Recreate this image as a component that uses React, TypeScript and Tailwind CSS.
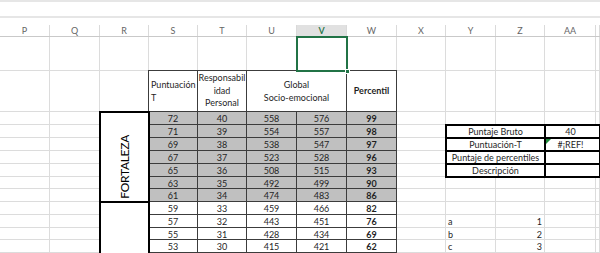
import clsx from "clsx";

const S = [72, 71, 69, 67, 65, 63, 61, 59, 57, 55, 53];
const T = [40, 39, 38, 37, 36, 35, 34, 33, 32, 31, 30];
const U = [558, 554, 538, 523, 508, 492, 474, 459, 443, 428, 415];
const V = [576, 557, 547, 528, 515, 499, 483, 466, 451, 434, 421];
const W = [99, 98, 97, 96, 93, 90, 86, 82, 76, 69, 62];

const letters = ["P", "Q", "R", "S", "T", "U", "V", "W", "X", "Y", "Z", "AA", ""];
const COLS = "grid-cols-[50px_50px_49px_49px_49px_50px_50px_50px_49px_50px_49px_51px_1fr]";

const DataCell = ({ children, gray, bold }: { children?: React.ReactNode; gray?: boolean; bold?: boolean }) => (
  <div
    className={clsx(
      "flex items-center justify-center pt-px border-r border-b border-[#3c3c3c] text-[9px] leading-none",
      gray ? "bg-[#c0c0c0]" : "bg-white",
      bold && "font-bold"
    )}
  >
    {children}
  </div>
);

export default function App() {
  return (
    <div className="w-[600px] h-[253px] overflow-hidden bg-white font-['Lato',sans-serif] text-[#1f1f1f]">
      {/* formula bar strip */}
      <div className="h-[2px] bg-[#e6e6e6]" />
      <div className="h-[14px] bg-white" />
      <div className="h-[2px] bg-[#e6e6e6]" />
      <div className="h-[7px] bg-white" />

      {/* column headers */}
      <div className={clsx("grid h-[12px] border-b border-[#c9c9c9]", COLS)}>
        {letters.map((l) => (
          <div
            key={l || "end"}
            className={clsx(
              "flex items-center justify-center border-r border-[#dadada] text-[9px] leading-none",
              l === "V" ? "bg-[#e1e1e1] text-[#217346] font-semibold" : "text-[#666]"
            )}
          >
            {l}
          </div>
        ))}
      </div>

      {/* sheet */}
      <div className={clsx("grid grid-rows-[34px_41px_13px_13px_13px_13px_13px_12px_13px_13px_13px_12px_13px_13px]", COLS)}>
        {Array.from({ length: 14 }).flatMap((_, r) =>
          letters.map((_, c) => (
            <div key={`${r}-${c}`} style={{ gridRow: r + 1, gridColumn: c + 1 }} className="border-r border-b border-[#dcdcdc]" />
          ))
        )}

        {/* selected cell V */}
        <div className="col-start-7 row-start-1 -m-px border-2 border-[#217346] relative">
          <div className="absolute -right-[4px] -bottom-[4px] w-[5px] h-[5px] bg-[#217346] border border-white" />
        </div>

        {/* table header */}
        <div className="col-start-4 row-start-2 -mt-px -ml-px border border-[#3c3c3c] bg-white flex items-center pl-[2px] text-[9px] leading-[13px]">
          Puntuación<br />T
        </div>
        <div className="col-start-5 row-start-2 -mt-px border-t border-r border-b border-[#3c3c3c] bg-white flex items-center justify-center text-center text-[9px] leading-[12.5px]">
          Responsabil<br />idad<br />Personal
        </div>
        <div className="col-start-6 col-span-2 row-start-2 -mt-px border-t border-r border-b border-[#3c3c3c] bg-white flex items-center justify-center text-center text-[9px] leading-[13px]">
          Global<br />Socio-emocional
        </div>
        <div className="col-start-8 row-start-2 -mt-px border-t border-r border-b border-[#3c3c3c] bg-white flex items-center justify-center text-[9px] font-bold">
          Percentil
        </div>

        {/* data */}
        <div className="col-start-4 col-span-5 row-start-3 row-span-12 grid grid-cols-[49px_49px_50px_50px_50px] grid-rows-[13px_13px_13px_13px_13px_12px_13px_13px_13px_12px_13px_13px]">
          {S.map((s, i) => (
            <div key={s} className="contents">
              <DataCell gray={i < 7}>{s}</DataCell>
              <DataCell gray={i < 7}>{T[i]}</DataCell>
              <DataCell gray={i < 7}>{U[i]}</DataCell>
              <DataCell gray={i < 7}>{V[i]}</DataCell>
              <DataCell gray={i < 7} bold>{W[i]}</DataCell>
            </div>
          ))}
          <DataCell />
          <DataCell />
          <DataCell />
          <DataCell />
          <DataCell />
        </div>

        {/* merged row labels */}
        <div className="col-start-3 row-start-3 row-span-7 -m-px border-2 border-black bg-white flex items-end justify-center pb-[2px]">
          <span className="[writing-mode:vertical-rl] rotate-180 text-[12px] tracking-[-0.3px] text-black leading-none">FORTALEZA</span>
        </div>
        <div className="col-start-3 row-start-10 row-span-5 -m-px border-2 border-black bg-white" />

        {/* lookup box */}
        <div className="col-start-10 col-span-2 row-start-4 -m-px border-2 border-black flex items-center justify-center text-[9px] bg-white">Puntaje Bruto</div>
        <div className="col-start-12 col-span-2 row-start-4 -m-px border-2 border-black flex items-center justify-center text-[9px] bg-white pr-[4px]">40</div>
        <div className="col-start-10 col-span-2 row-start-5 -m-px border-2 border-black flex items-center justify-center text-[9px] bg-white">Puntuación-T</div>
        <div className="col-start-12 col-span-2 row-start-5 -m-px border-2 border-black flex items-center justify-center text-[9px] bg-white pr-[4px] relative">
          <div className="absolute top-0 left-0 w-0 h-0 border-t-[5px] border-r-[5px] border-t-[#1e8c3a] border-r-transparent" />
          #¡REF!
        </div>
        <div className="col-start-10 col-span-2 row-start-6 -m-px border-2 border-black flex items-center justify-center text-[9px] bg-white">Puntaje de percentiles</div>
        <div className="col-start-12 col-span-2 row-start-6 -m-px border-2 border-black bg-white" />
        <div className="col-start-10 col-span-2 row-start-7 -m-px border-2 border-black flex items-center justify-center text-[9px] bg-white">Descripción</div>
        <div className="col-start-12 col-span-2 row-start-7 -m-px border-2 border-black bg-white" />

        {/* a b c */}
        <div className="col-start-10 row-start-11 flex items-center pl-[2px] pt-px text-[9px]">a</div>
        <div className="col-start-11 row-start-11 flex items-center justify-end pr-[3px] pt-px text-[9px]">1</div>
        <div className="col-start-10 row-start-12 flex items-center pl-[2px] pt-px text-[9px]">b</div>
        <div className="col-start-11 row-start-12 flex items-center justify-end pr-[3px] pt-px text-[9px]">2</div>
        <div className="col-start-10 row-start-13 flex items-center pl-[2px] pt-px text-[9px]">c</div>
        <div className="col-start-11 row-start-13 flex items-center justify-end pr-[3px] pt-px text-[9px]">3</div>
      </div>
    </div>
  );
}
